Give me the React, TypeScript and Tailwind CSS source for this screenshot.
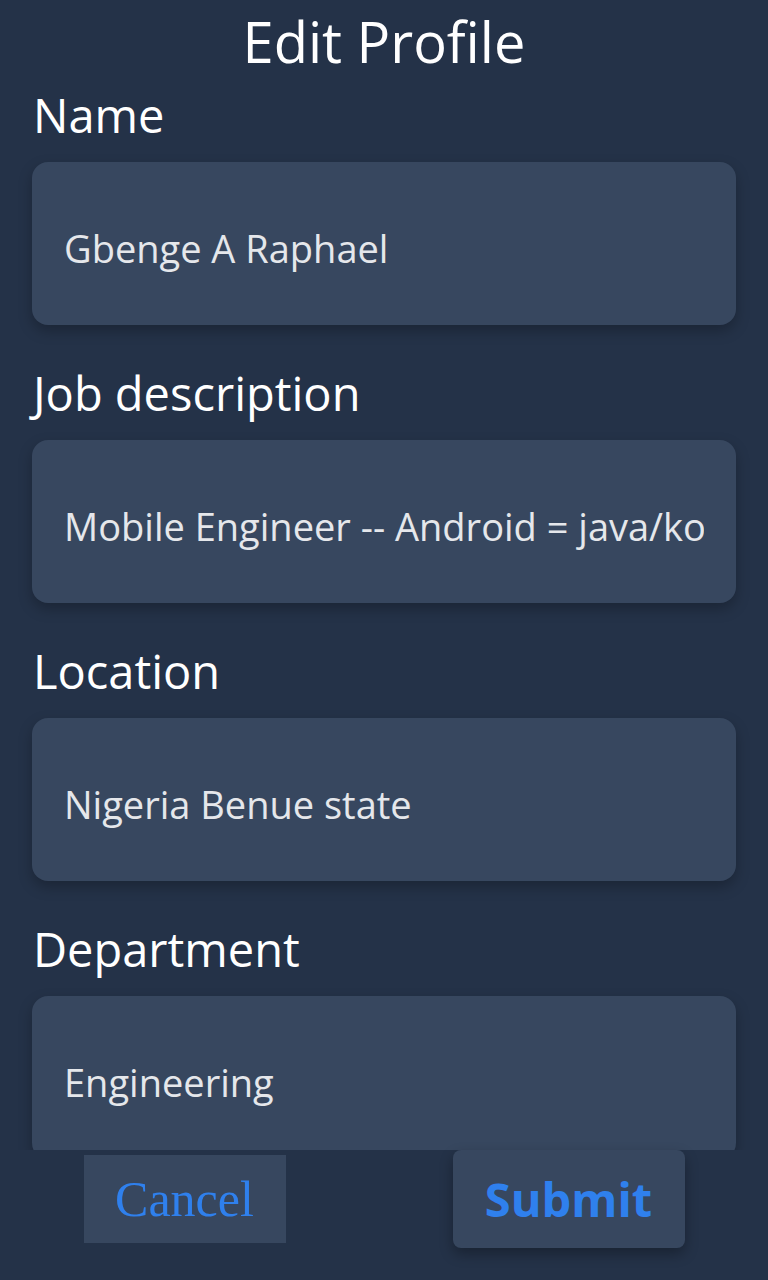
import React from 'react';

const fields = [
  { label: 'Name', value: 'Gbenge A Raphael' },
  { label: 'Job description', value: 'Mobile Engineer -- Android = java/kotlin' },
  { label: 'Location', value: 'Nigeria Benue state' },
  { label: 'Department', value: 'Engineering' },
];

export default function App() {
  return (
    <div className="h-[1280px] flex flex-col bg-[#243248] font-['Open_Sans',sans-serif]">
      {/* scrollable form */}
      <div className="h-[1150px] overflow-hidden px-8">
        <h1 className="text-center text-white text-[56px] leading-[82px]">Edit Profile</h1>
        {fields.map((f) => (
          <div key={f.label} className="mb-[35px]">
            <label className="block text-white text-[47px] leading-[66px] pl-px">{f.label}</label>
            <input
              readOnly
              value={f.value}
              className="mt-[14px] w-full h-[163px] rounded-2xl bg-[#37475f] px-8 pt-2 text-[38px] text-[#e5e7eb] outline-none shadow-[0_6px_14px_rgba(0,0,0,0.25)]"
            />
          </div>
        ))}
      </div>

      {/* actions */}
      <div className="h-[98px] flex items-center justify-around">
        <button className="w-[202px] h-[88px] bg-[#37475f] text-[#2f80ed] text-[50px] font-['Liberation_Serif',serif]">
          Cancel
        </button>
        <button className="w-[232px] h-[98px] rounded-lg bg-[#37475f] text-[#2f80ed] text-[47px] font-bold shadow-[0_6px_14px_rgba(0,0,0,0.3)]">
          Submit
        </button>
      </div>
    </div>
  );
}
